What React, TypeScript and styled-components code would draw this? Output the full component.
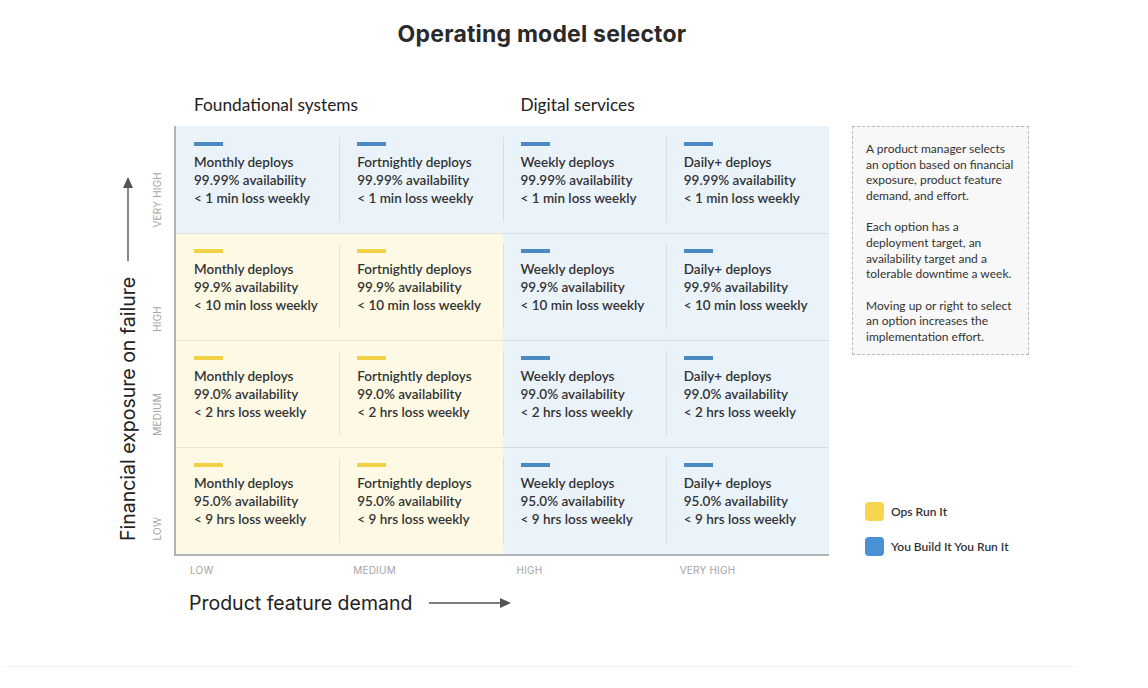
import React from "react";
import styled, { createGlobalStyle, css } from "styled-components";

const GlobalStyle = createGlobalStyle`
  html, body { margin: 0; padding: 0; background: #ffffff; }
  body { font-family: "Lato", "Liberation Sans", sans-serif; color: #333; }
  * { box-sizing: border-box; }
`;

const Page = styled.div`
  width: 1074px;
  margin-left: 3px;
  padding-top: 20px;
`;

const Title = styled.h1`
  margin: 0;
  text-align: center;
  font-family: "Inter", "Noto Sans", sans-serif;
  font-weight: 700;
  font-size: 23px;
  letter-spacing: 0.2px;
  line-height: 28px;
  color: #2a2a2a;
  padding-left: 4px;
`;

const Diagram = styled.div`
  display: grid;
  grid-template-columns: 25px 34px 655px 23px 177px;
  grid-template-rows: 39px 430px 24px 40px;
  padding-left: 112px;
  margin-top: 39px;
`;

const Header = styled.div`
  grid-column: 3;
  grid-row: 1;
  display: grid;
  grid-template-columns: 1fr 1fr;
  padding-left: 2px;
  align-items: end;
  padding-bottom: 11px;
`;

const HeaderLabel = styled.div`
  padding-left: 18px;
  font-size: 17.3px;
  line-height: 20px;
  color: #222;
`;

const YTitleCol = styled.div`
  grid-column: 1;
  grid-row: 2;
  display: flex;
  justify-content: center;
`;

const VerticalFlow = styled.div`
  writing-mode: vertical-rl;
  transform: rotate(180deg);
  display: flex;
  align-items: center;
`;

const YTitleFlow = styled(VerticalFlow)`
  padding-top: 15px;
  gap: 16px;
`;

const AxisTitle = styled.span`
  font-family: "Inter", "Open Sans", sans-serif;
  font-weight: 400;
  font-size: 19.5px;
  line-height: 22px;
  color: #222;
  white-space: nowrap;
`;

const YLabelCol = styled.div`
  grid-column: 2;
  grid-row: 2;
  display: grid;
  grid-template-rows: repeat(4, 104px);
  align-content: start;
`;

const YLabelCell = styled.div`
  display: flex;
  justify-content: center;
  align-items: flex-end;
  padding-bottom: 2px;
`;

const SmallAxisLabel = styled.span`
  font-family: "Inter", "Open Sans", sans-serif;
  font-size: 10px;
  line-height: 12px;
  color: #a4a4a4;
  letter-spacing: 0.2px;
  white-space: nowrap;
`;

const VerticalLabel = styled(SmallAxisLabel)`
  writing-mode: vertical-rl;
  transform: rotate(180deg);
`;

type Tone = "ops" | "you";

const tones = {
  ops: { bg: "#fdf9e4", bar: "#f1d146", line: "#e7e4d6" },
  you: { bg: "#eaf2fa", bar: "#4a89c2", line: "#d6dfe8" },
};

const Matrix = styled.div`
  grid-column: 3;
  grid-row: 2;
  display: grid;
  grid-template-columns: repeat(4, 1fr);
  grid-template-rows: repeat(4, 1fr);
  border-left: 2px solid #b3b3b3;
  border-bottom: 2px solid #b3b3b3;
`;

const Cell = styled.div<{ $tone: Tone; $col: number; $row: number }>`
  padding: 16px 18px 0;
  ${({ $tone, $col, $row }) => {
    const t = tones[$tone];
    const layers: string[] = [];
    if ($col > 0)
      layers.push(`linear-gradient(${t.line}, ${t.line}) left center / 1px calc(100% - 22px) no-repeat`);
    if ($row > 0)
      layers.push(`linear-gradient(${t.line}, ${t.line}) left top / 100% 1px no-repeat`);
    layers.push(t.bg);
    return css`
      background: ${layers.join(", ")};
    `;
  }}
`;

const Bar = styled.div<{ $tone: Tone }>`
  width: 29px;
  height: 4px;
  background: ${({ $tone }) => tones[$tone].bar};
  margin-bottom: 7px;
`;

const CellLine = styled.div`
  font-size: 13.5px;
  line-height: 18px;
  font-weight: 600;
  color: #333;
  white-space: nowrap;
`;

const XLabelRow = styled.div`
  grid-column: 3;
  grid-row: 3;
  display: grid;
  grid-template-columns: repeat(4, 1fr);
  padding-left: 2px;
  padding-top: 2px;
`;

const XLabelCell = styled.div`
  padding-left: 14px;
`;

const XTitleRow = styled.div`
  grid-column: 3;
  grid-row: 4;
  display: flex;
  align-items: center;
  gap: 17px;
  padding-left: 15px;
  padding-top: 5px;
`;

const Side = styled.div`
  grid-column: 5;
  grid-row: 2;
  display: flex;
  flex-direction: column;
  justify-content: space-between;
`;

const Note = styled.div`
  border: 1px dashed #b9b9b9;
  background: #f8f8f8;
  padding: 14px 8px 9px 13px;
  font-size: 12px;
  line-height: 15.7px;
  color: #333;
  height: 229px;
`;

const NotePara = styled.p`
  margin: 0 0 15.5px;
  &:last-child { margin-bottom: 0; }
`;

const Legend = styled.div`
  display: flex;
  flex-direction: column;
  gap: 16px;
  padding-left: 13px;
`;

const LegendItem = styled.div`
  display: flex;
  align-items: center;
  gap: 7px;
  font-size: 12px;
  font-weight: 600;
  color: #333;
`;

const Swatch = styled.span<{ $color: string }>`
  width: 19px;
  height: 19px;
  border-radius: 4px;
  background: ${({ $color }) => $color};
  flex: none;
`;

const Footer = styled.div`
  margin-top: 46px;
  height: 1px;
  background: #f1f1f1;
`;

const columns = ["Monthly deploys", "Fortnightly deploys", "Weekly deploys", "Daily+ deploys"];
const rows = [
  { avail: "99.99% availability", loss: "< 1 min loss weekly" },
  { avail: "99.9% availability", loss: "< 10 min loss weekly" },
  { avail: "99.0% availability", loss: "< 2 hrs loss weekly" },
  { avail: "95.0% availability", loss: "< 9 hrs loss weekly" },
];
const levelsTopDown = ["VERY HIGH", "HIGH", "MEDIUM", "LOW"];
const levels = ["LOW", "MEDIUM", "HIGH", "VERY HIGH"];

const ArrowUp = () => (
  <svg width="12" height="84" viewBox="0 0 12 84">
    <line x1="6" y1="0" x2="6" y2="74" stroke="#555" strokeWidth="1.4" />
    <polygon points="1,73 11,73 6,84" fill="#555" />
  </svg>
);

const ArrowRight = () => (
  <svg width="82" height="12" viewBox="0 0 82 12">
    <line x1="0" y1="6" x2="72" y2="6" stroke="#555" strokeWidth="1.4" />
    <polygon points="71,1 71,11 82,6" fill="#555" />
  </svg>
);

export default function App() {
  return (
    <>
      <GlobalStyle />
      <Page>
        <Title>Operating model selector</Title>
        <Diagram>
          <Header>
            <HeaderLabel>Foundational systems</HeaderLabel>
            <HeaderLabel>Digital services</HeaderLabel>
          </Header>

          <YTitleCol>
            <YTitleFlow>
              <AxisTitle>Financial exposure on failure</AxisTitle>
              <ArrowUp />
            </YTitleFlow>
          </YTitleCol>

          <YLabelCol>
            {levelsTopDown.map((l) => (
              <YLabelCell key={l}>
                <VerticalLabel>{l}</VerticalLabel>
              </YLabelCell>
            ))}
          </YLabelCol>

          <Matrix>
            {rows.map((r, ri) =>
              columns.map((c, ci) => {
                const tone: Tone = ri === 0 || ci >= 2 ? "you" : "ops";
                return (
                  <Cell key={`${ri}-${ci}`} $tone={tone} $col={ci} $row={ri}>
                    <Bar $tone={tone} />
                    <CellLine>{c}</CellLine>
                    <CellLine>{r.avail}</CellLine>
                    <CellLine>{r.loss}</CellLine>
                  </Cell>
                );
              })
            )}
          </Matrix>

          <XLabelRow>
            {levels.map((l) => (
              <XLabelCell key={l}>
                <SmallAxisLabel>{l}</SmallAxisLabel>
              </XLabelCell>
            ))}
          </XLabelRow>

          <XTitleRow>
            <AxisTitle>Product feature demand</AxisTitle>
            <ArrowRight />
          </XTitleRow>

          <Side>
            <Note>
              <NotePara>
                A product manager selects an option based on financial exposure, product feature demand, and effort.
              </NotePara>
              <NotePara>
                Each option has a deployment target, an availability target and a tolerable downtime a week.
              </NotePara>
              <NotePara>
                Moving up or right to select an option increases the implementation effort.
              </NotePara>
            </Note>
            <Legend>
              <LegendItem>
                <Swatch $color="#f5d64c" />
                Ops Run It
              </LegendItem>
              <LegendItem>
                <Swatch $color="#4a90d4" />
                You Build It You Run It
              </LegendItem>
            </Legend>
          </Side>
        </Diagram>
        <Footer />
      </Page>
    </>
  );
}
